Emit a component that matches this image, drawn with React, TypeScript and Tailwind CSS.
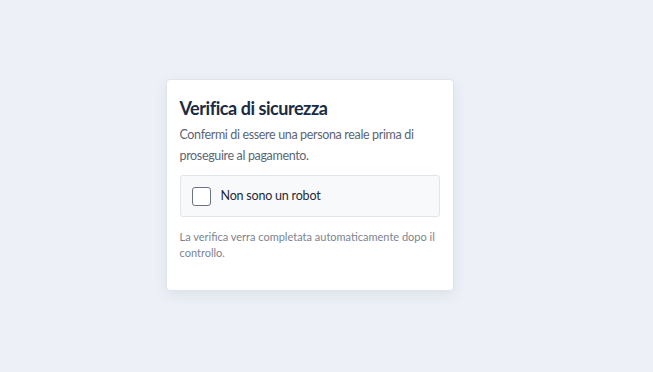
export default function App() {
  return (
    <main className="flex min-h-[372px] w-full items-start justify-center bg-[#edf1f7] pt-[79px] pr-[34px] font-['Lato','Noto_Sans',sans-serif]">
      <section className="w-[288px] rounded-[4px] border border-[#dfe4ec] bg-white px-[13px] pt-[16px] pb-[29px] shadow-[0_4px_14px_rgba(30,45,70,0.08)]">
        <h1 className="text-[18px] leading-[24px] font-bold tracking-[-0.45px] text-[#1a2b42]">
          Verifica di sicurezza
        </h1>
        <p className="mt-[4px] text-[12.5px] leading-[21px] tracking-[-0.35px] text-[#5b6675]">
          Confermi di essere una persona reale prima di proseguire al pagamento.
        </p>
        <label className="mt-[9px] flex h-[42px] cursor-pointer items-center gap-[10px] rounded-[3px] border border-[#e1e6ed] bg-[#f7f9fb] px-[11px]">
          <span className="h-[19px] w-[19px] rounded-[3px] border-[1.5px] border-[#6b7280] bg-white" />
          <span className="text-[12.5px] tracking-[-0.2px] text-[#1f2937]">Non sono un robot</span>
        </label>
        <p className="mt-[12px] text-[11px] leading-[16px] text-[#7b8490]">
          La verifica verra completata automaticamente dopo il controllo.
        </p>
      </section>
    </main>
  );
}
